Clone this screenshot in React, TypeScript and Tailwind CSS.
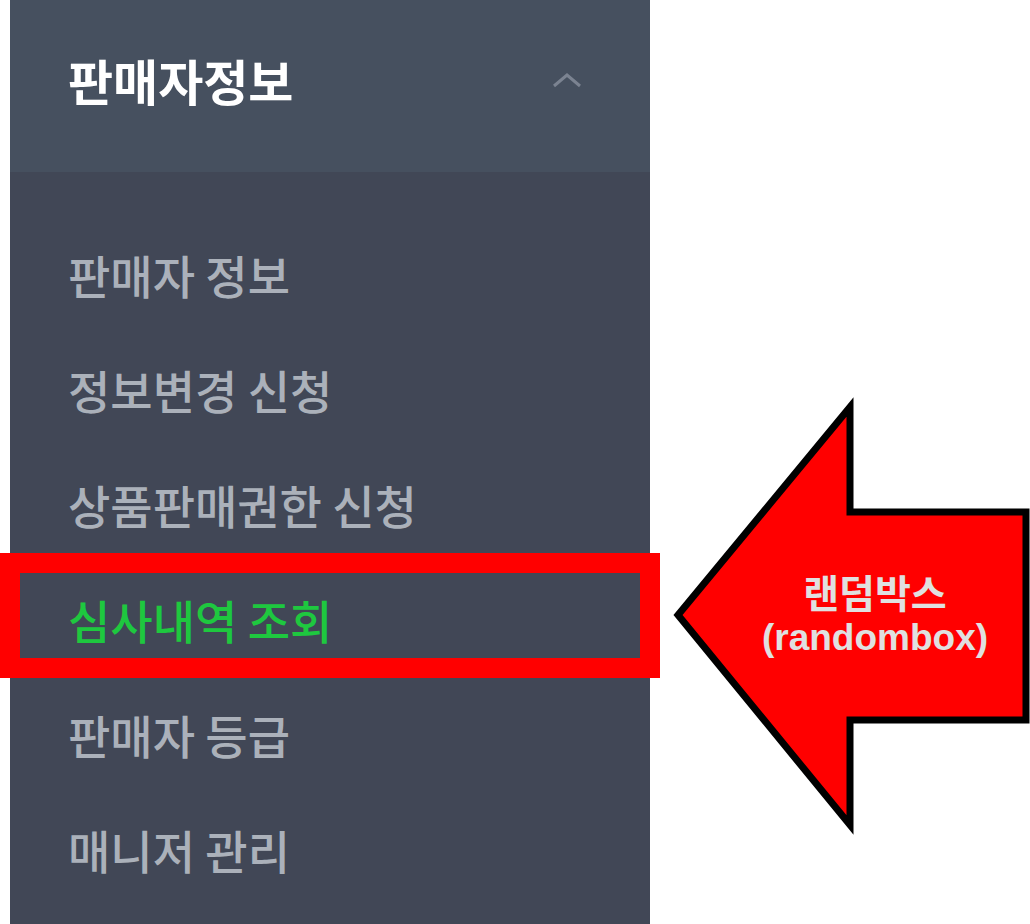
import React from "react";

const items = [
  "판매자 정보",
  "정보변경 신청",
  "상품판매권한 신청",
  "심사내역 조회",
  "판매자 등급",
  "매니저 관리",
];

export default function App() {
  return (
    <div
      className="relative w-[1030px] h-[924px] bg-white overflow-hidden"
      style={{ fontFamily: '"Noto Sans CJK KR", "Noto Sans", sans-serif' }}
    >
      <div className="ml-[10px] w-[640px] h-[924px] bg-[#414756] flex flex-col">
        <div className="h-[172px] bg-[#46505f] flex items-center justify-between pl-[58px] pr-[68px] pb-[14px]">
          <span className="text-[49px] font-bold text-white leading-none">
            판매자정보
          </span>
          <svg width="30" height="16" viewBox="0 0 30 16" className="mt-[2px]">
            <polyline
              points="2,14 15,3 28,14"
              fill="none"
              stroke="#7b8391"
              strokeWidth="3"
            />
          </svg>
        </div>
        <div className="flex flex-col pt-[44px]">
          {items.map((t, i) => (
            <div
              key={t}
              className={
                "h-[115px] flex items-center pl-[58px] text-[46px] leading-none font-medium " +
                (i === 3 ? "text-[#1ec83f]" : "text-[#abb1ba]")
              }
            >
              {t}
            </div>
          ))}
        </div>
      </div>

      <div className="absolute left-0 top-[553px] w-[660px] h-[125px] border-[20px] border-[#ff0000]" />

      <svg
        className="absolute left-0 top-0"
        width="1030"
        height="924"
        viewBox="0 0 1030 924"
      >
        <polygon
          points="678,615 850,407 850,512 1026,512 1026,720 850,720 850,825"
          fill="#ff0000"
          stroke="#000"
          strokeWidth="7"
          strokeLinejoin="miter"
        />
      </svg>

      <div
        className="absolute left-[760px] top-[568px] w-[230px] flex flex-col items-center text-[#e0e0e0] font-bold"
        style={{ fontFamily: '"Liberation Sans", "Noto Sans CJK KR", sans-serif' }}
      >
        <span
          className="text-[39px] leading-[46px]"
          style={{ fontFamily: '"Noto Sans CJK KR", sans-serif' }}
        >
          랜덤박스
        </span>
        <span className="text-[37px] leading-[44px] mt-[2px]">(randombox)</span>
      </div>
    </div>
  );
}
